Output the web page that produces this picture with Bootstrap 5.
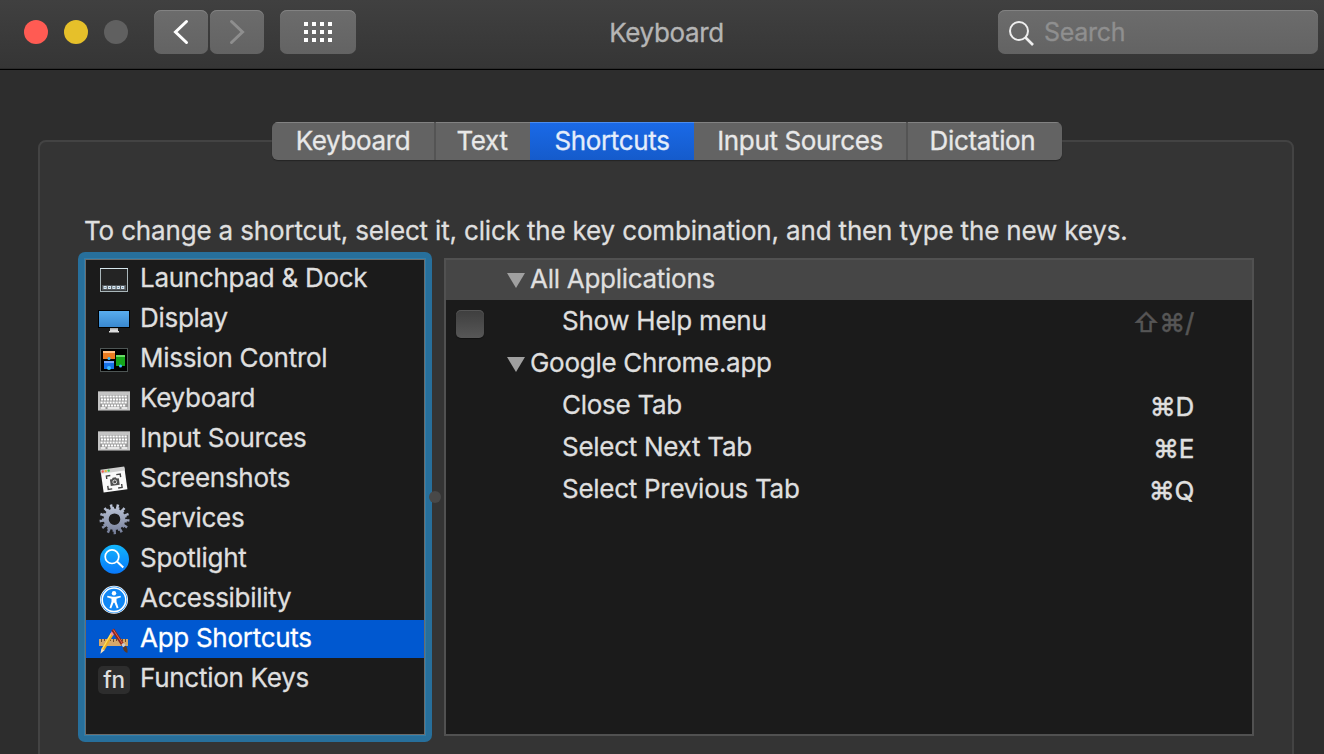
<!DOCTYPE html>
<html lang="en">
<head>
<meta charset="utf-8">
<meta name="viewport" content="width=device-width, initial-scale=1">
<title>Keyboard</title>
<link href="https://cdn.jsdelivr.net/npm/bootstrap@5.3.0/dist/css/bootstrap.min.css" rel="stylesheet">
<style>
body{background:#2d2d2d;color:#dfdfdf;font-family:Inter,"Liberation Sans",sans-serif;font-size:26px;line-height:38px;letter-spacing:-.28px;height:754px;overflow:hidden;-webkit-text-stroke:.3px}
.titlebar{height:70px;background:linear-gradient(#404040,#353535);border-bottom:1px solid #000;box-shadow:inset 0 -1px #2b2b2b;padding:10px 6px 0 24px}
.lights{padding-top:10px;margin-right:10px}
.light{width:24px;height:24px;border-radius:50%;margin-right:16px}
.light-close{background:#ff5b53}
.light-min{background:#e6c02a}
.light-zoom{background:#606060}
.tool{width:54px;height:44px;border:0;border-radius:7px;background:linear-gradient(#6c6c6c,#636363);box-shadow:inset 0 1px #828282;padding:0;display:block}
.tool svg{display:block}
.tool-next{margin-left:2px}
.tool-grid{width:76px;margin-left:16px}
.win-title{left:0;right:0;top:14px;text-align:center;padding-left:9px;color:#b5b5b5;letter-spacing:-.35px}
.search{width:320px;color:#8f8f8f;padding-left:10px;line-height:44px;letter-spacing:-.3px;font-size:25px}
.group-box{margin:70px 30px 0 38px;height:640px;border:2px solid #434343;border-radius:8px;background:#343434;padding:0 38px}
.tabs{width:790px;height:38px;margin:-20px 0 0 194px;border-radius:6px;overflow:hidden;box-shadow:0 1px 1px #242424}
.seg{background:#636363;box-shadow:inset 0 1px #828282;color:#e8e8e8;text-align:center;letter-spacing:-.35px}
.seg.active{background:linear-gradient(#1a6ae8,#155bcb);box-shadow:inset 0 1px #4b8df0;color:#e4edfb}
.seg.ruled{border-right:2px solid #545454}
.w-164{width:164px}.w-94{width:94px;padding-right:2px}.w-214{width:214px}.w-154{width:154px;padding-right:5px}
.hint{margin:52px 0 0 6px;height:40px;white-space:nowrap;letter-spacing:-.165px}
.focus-box{width:354px;height:490px;background:#276f9b;border-radius:7px;padding:6px}
.side-list{height:478px;border:1px solid #2f7daa;background:#6b6b6b;padding:1px}
.side-inner{background:#1b1b1b;height:100%;border-radius:0}
.side-item{height:38px;margin-bottom:2px;padding:0 0 0 12px;border:0;border-radius:0!important;color:#dfdfdf;background:transparent;line-height:36px;white-space:nowrap}
.side-item.list-group-item.active{background:#0058d0;color:#fff;margin-top:0}
.side-item svg{margin:3px 10px 0 0;flex:none;-webkit-text-stroke:0}
.fn-text{font-size:22.5px;fill:#dfdfdf;font-weight:500}
.splitter{width:12px;height:12px;border-radius:50%;background:#484848;margin:239px 0 0 -3px}
.keys-box{width:810px;height:478px;margin:6px 0 0 3px;border:2px solid #515151;background:#1b1b1b}
.key-row{height:42px;line-height:42px;padding-right:58px}
.key-row.head{height:40px;line-height:38px;background:#464646;padding-bottom:2px}
.tri{width:0;border:9px solid transparent;border-top:15px solid #a0a0a0;border-bottom:0;margin:2px 5px 0 61px}
.entry{padding-left:116px}
.combo{padding-top:2px;-webkit-text-stroke:.5px}
.combo-off{color:#565656;padding-top:3px}
.check{width:28px;height:28px;border-radius:5px;background:linear-gradient(#3e3e3e,#575757);box-shadow:inset 0 1px #555,0 1px 1px #111;margin:6px 78px 0 10px}
</style>
</head>
<body>
<header class="titlebar d-flex position-relative">
  <div class="lights d-flex">
    <span class="light light-close"></span><span class="light light-min"></span><span class="light light-zoom"></span>
  </div>
  <button class="tool" aria-label="Back"><svg width="54" height="44" fill="none" stroke="#fff" stroke-width="3" stroke-linecap="round"><path d="M32.500 11.500L21.500 22l11 10.500"/></svg></button>
  <button class="tool tool-next" aria-label="Forward"><svg width="54" height="44" fill="none" stroke="#8e8e8e" stroke-width="3" stroke-linecap="round"><path d="M21.500 11.500L32.500 22l-11 10.500"/></svg></button>
  <button class="tool tool-grid" aria-label="Show All"><svg width="76" height="44" fill="none" stroke="#fff" stroke-width="4" stroke-dasharray="4 4"><path d="M24 14h28M24 22h28M24 30h28"/></svg></button>
  <div class="win-title position-absolute">Keyboard</div>
  <div class="tool search d-flex ms-auto position-relative"><svg class="me-2" width="28" height="44" fill="none" stroke="#eee" stroke-width="2"><circle cx="11" cy="21" r="9"/><path d="M17.500 27.500l7.500 7.500" stroke-width="2.600"/></svg><span>Search</span></div>
</header>
<main class="group-box">
  <div class="tabs d-flex">
    <div class="seg ruled w-164">Keyboard</div><div class="seg w-94">Text</div><div class="seg active w-164">Shortcuts</div><div class="seg ruled w-214">Input Sources</div><div class="seg w-154">Dictation</div>
  </div>
  <div class="hint">To change a shortcut, select it, click the key combination, and then type the new keys.</div>
  <div class="d-flex">
    <div class="focus-box flex-shrink-0"><div class="side-list"><div class="side-inner list-group">
      <div class="side-item list-group-item d-flex"><svg width="32" height="34"><rect x="2.500" y="5.500" width="27" height="23" fill="#242424" stroke="#a9b6ba"/><path d="M2 5.500h28" stroke="#d5e6ec"/><path d="M4 22h24v5.500H4z" fill="#50565b"/><path d="M5.500 24.500h21" stroke="#dce8f0" stroke-width="3" stroke-dasharray="3.200 1.200"/><path d="M6.500 24.500h19" stroke="#557f9f" stroke-dasharray="1.200 3.200"/></svg>Launchpad &amp; Dock</div>
      <div class="side-item list-group-item d-flex"><svg width="32" height="34"><defs><linearGradient id="dg" x2="0" y2="1"><stop stop-color="#59adee"/><stop offset="1" stop-color="#3988cf"/></linearGradient></defs><path d="M0 7h32v18H0z" fill="#000"/><path d="M1 8h30v16H1z" fill="url(#dg)"/><path d="M12 25h8v3h1v1.500H11V28h1z" fill="#ddd"/><path d="M12 25h8v1.500h-8z" fill="#aaa"/></svg>Display</div>
      <div class="side-item list-group-item d-flex"><svg width="32" height="34"><rect x="2.500" y="5.500" width="27" height="23" fill="#000" stroke="#4d5554"/><path d="M5 8h12v8H5z" fill="#eb7c20"/><path d="M5 8h12v2H5z" fill="#ffc084"/><path d="M6 18h10v8H6z" fill="#1772e8"/><path d="M6 18h10v2H6z" fill="#78a8ff"/><path d="M18 12h9v11h-9z" fill="#16a51a"/><path d="M18 12h9v2h-9z" fill="#69dc66"/><g fill="#3dbdff"><circle cx="11" cy="15.500" r="1.500"/><circle cx="11" cy="25" r="2"/><circle cx="22.500" cy="23" r="1.500"/></g></svg>Mission Control</div>
      <div class="side-item list-group-item d-flex"><svg width="32" height="34"><g id="kb"><path d="M0 8h32v20H0z" fill="#c4c4c4"/><path d="M0 8h32v1H0z" fill="#8b8b8b"/><path d="M0 27h32v1H0z" fill="#777"/><path d="M2 12h28v14H2z" fill="#989898"/><g stroke="#fff" stroke-width="2" stroke-dasharray="2.200 .8"><path d="M2.500 13.500h27M3 16.500h26M2.500 19.500h27M4 22.500h24"/></g><path d="M2.500 25h5M9.500 25h12M23.500 25h6" stroke="#fff" stroke-width="1.600"/></g></svg>Keyboard</div>
      <div class="side-item list-group-item d-flex"><svg width="32" height="34"><use href="#kb"/></svg>Input Sources</div>
      <div class="side-item list-group-item d-flex"><svg width="32" height="34"><g transform="rotate(-8 16 17)"><path d="M4 6h24v22H4z" fill="#fafafa"/><path d="M4 5h24v4H4z" fill="#d0d0d0"/><circle cx="6" cy="7" r="1.200" fill="#f15b55"/><circle cx="9" cy="7" r="1.200" fill="#e8b43a"/><circle cx="12" cy="7" r="1.200" fill="#3ec655"/><path d="M9 15v-3h4M19 12h4v3M23 22v3.500h-4M13 25.500H9V22" fill="none" stroke="#444" stroke-width="1.400"/><path d="M12 16h2l1-1.500h3L19 16h2v6.500h-9z" fill="#505050"/><circle cx="16.500" cy="19" r="1.900" fill="none" stroke="#ddd" stroke-width=".9"/></g></svg>Screenshots</div>
      <div class="side-item list-group-item d-flex"><svg width="32" height="34"><defs><linearGradient id="gg" x1="0" y1="1" x2="0" y2="31" gradientUnits="userSpaceOnUse"><stop stop-color="#c1c9db"/><stop offset="1" stop-color="#747d98"/></linearGradient></defs><g fill="none" stroke="url(#gg)"><circle cx="16.500" cy="16.200" r="8.300" stroke-width="5"/><circle cx="16.500" cy="16.200" r="11.300" stroke-width="2.400" stroke-dasharray="3.200 2.262"/><circle cx="16.500" cy="16.200" r="13" stroke-width="4" stroke-dasharray="2.300 3.983"/></g></svg>Services</div>
      <div class="side-item list-group-item d-flex"><svg width="32" height="34"><defs><linearGradient id="sg" x2="0" y2="1"><stop stop-color="#12b5fb"/><stop offset="1" stop-color="#0878fb"/></linearGradient></defs><circle cx="16.500" cy="16.200" r="14.500" fill="url(#sg)"/><g fill="none" stroke="#fff" stroke-width="1.700"><circle cx="14" cy="13.700" r="6.800"/><path d="M19 18.500l6.300 6" stroke-width="2"/></g></svg>Spotlight</div>
      <div class="side-item list-group-item d-flex"><svg width="32" height="34"><g transform="translate(0 -3.200)"><circle cx="16" cy="20" r="14" fill="#fff"/><circle cx="16" cy="20" r="13.200" fill="#1187f5"/><circle cx="16" cy="20" r="11.800" fill="none" stroke="#fff" stroke-width="1.600"/><g fill="#fff"><circle cx="16" cy="13.500" r="2.200"/><path d="M9.500 16l5 1h3l5-1 .5 1.500-4.500 1.500v3l2 6-1.700.8L16.500 23h-1l-2.300 5.800-1.700-.8 2-6v-3L9 17.500z"/></g></g></svg>Accessibility</div>
      <div class="side-item list-group-item d-flex active"><svg width="32" height="34"><path d="M1 16h29v7H1z" fill="#d6a86a"/><path d="M3.500 16v3M6.500 16v2M9.500 16v3M12.500 16v2M15.500 16v3M18.500 16v2M21.500 16v3M24.500 16v2M27.500 16v3" stroke="#704e2b"/><path d="M14 11L5 26.500" stroke="#edae23" stroke-width="3.400"/><path d="M13.300 10.500L4.300 26" stroke="#ffe05e" stroke-width="1.300"/><path d="M12.200 11l1.500-2.700 3 1.700-1.600 2.700z" fill="#ed8fab"/><path d="M3.400 25.400l3.200 1.900-4.200 3.500z" fill="#f8dfb5"/><path d="M14.700 6.500L25 22" stroke="#8d261c" stroke-width="3.300"/><path d="M15.200 6.500l9.500 14.500" stroke="#e7654a" stroke-width="1"/><path d="M23.300 21.500l2.700-1.800 2 3-2.800 1.800z" fill="#c8ced5"/><path d="M25 24.500l2.800-1.900q2.500 4 1.500 7.500-4.300-2-4.300-5.600z" fill="#5b3926"/></svg>App Shortcuts</div>
      <div class="side-item list-group-item d-flex"><svg width="32" height="34"><rect y="3" width="32" height="28" rx="5" fill="#2d2d2d"/><text x="16" y="25" text-anchor="middle" class="fn-text">fn</text></svg>Function Keys</div>
    </div></div></div>
    <span class="splitter flex-shrink-0"></span>
    <section class="keys-box flex-shrink-0">
      <div class="key-row head d-flex align-items-center"><i class="tri"></i>All Applications</div>
      <div class="key-row d-flex align-items-center"><span class="check"></span><span>Show Help menu</span><span class="ms-auto combo combo-off">⇧⌘/</span></div>
      <div class="key-row d-flex align-items-center"><i class="tri"></i>Google Chrome.app</div>
      <div class="key-row entry d-flex"><span>Close Tab</span><span class="ms-auto combo">⌘D</span></div>
      <div class="key-row entry d-flex"><span>Select Next Tab</span><span class="ms-auto combo">⌘E</span></div>
      <div class="key-row entry d-flex"><span>Select Previous Tab</span><span class="ms-auto combo">⌘Q</span></div>
    </section>
  </div>
</main>
<script src="https://cdn.jsdelivr.net/npm/bootstrap@5.3.0/dist/js/bootstrap.bundle.min.js"></script>
</body>
</html>
